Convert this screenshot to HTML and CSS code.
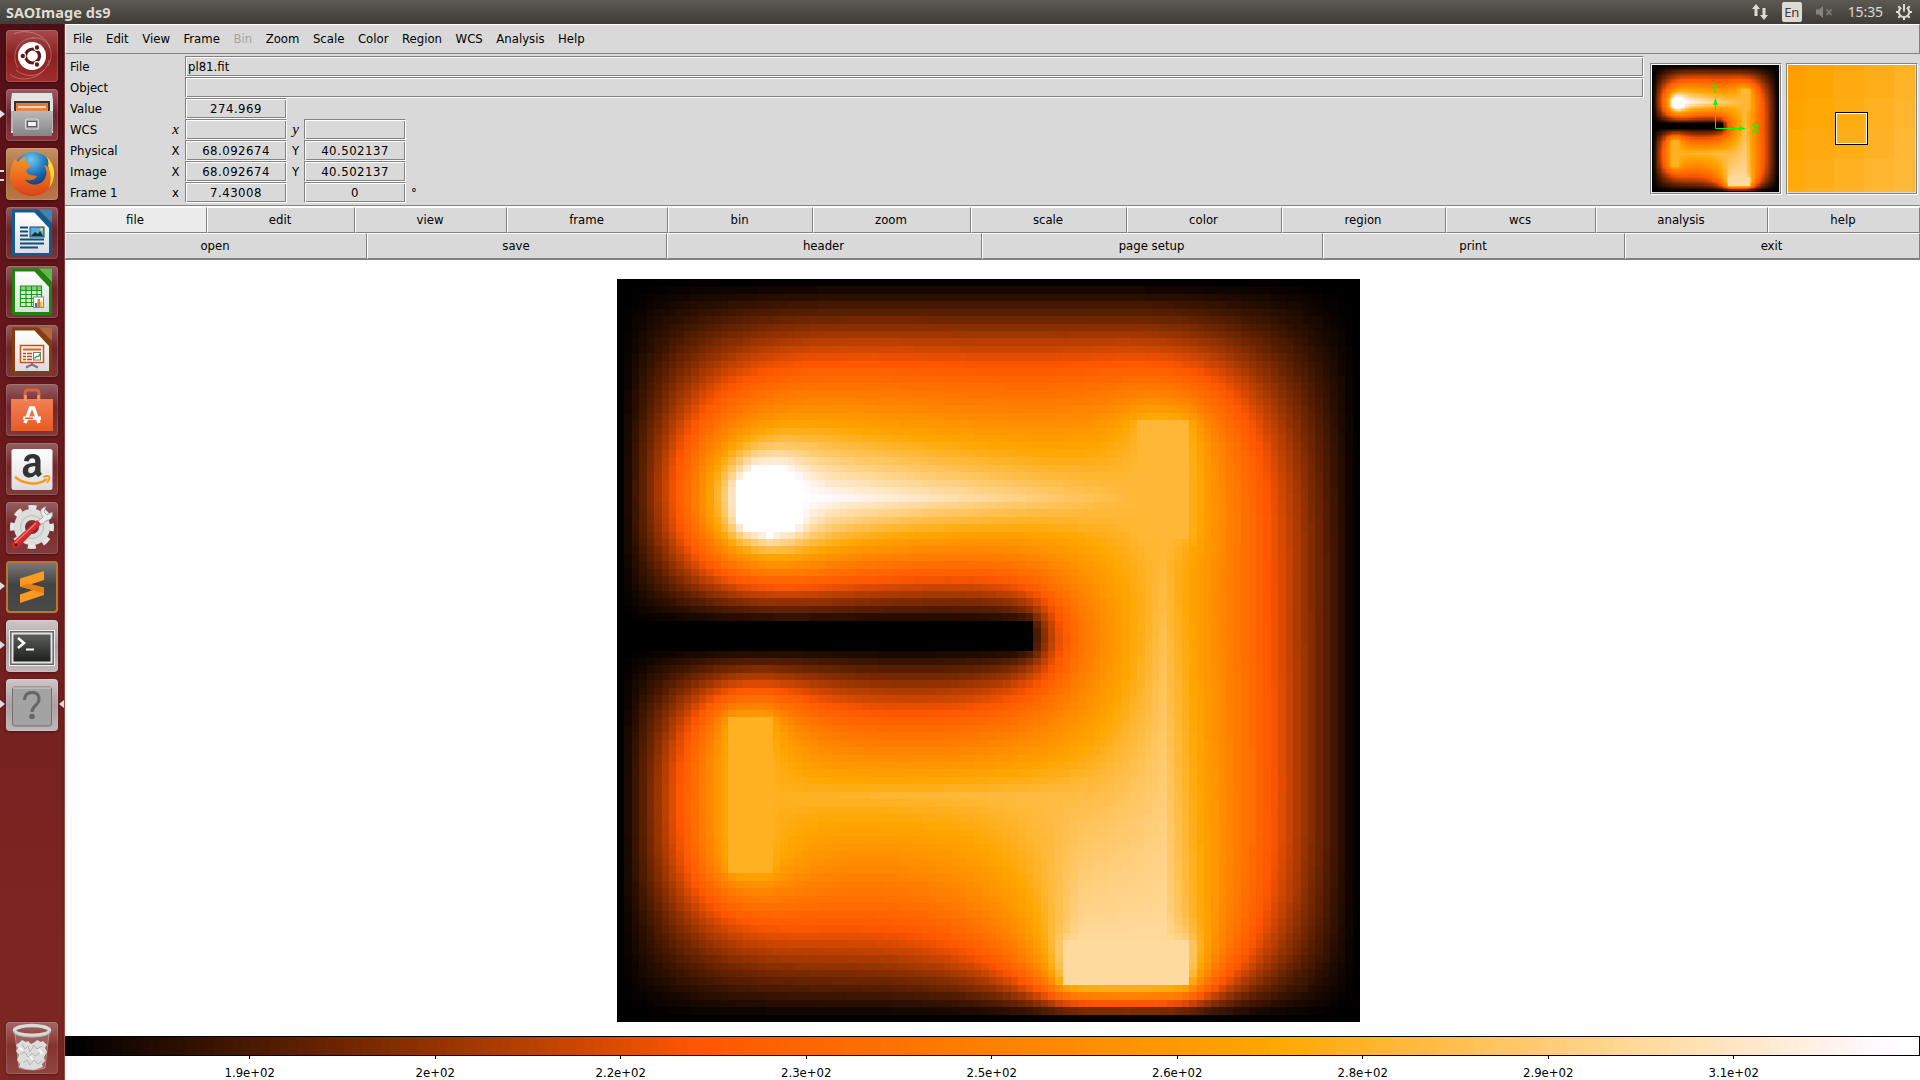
FILE: index.html
```html
<!DOCTYPE html>
<html lang="en">
<head>
<meta charset="utf-8">
<title>SAOImage ds9</title>
<link rel="stylesheet" href="styles.css">
</head>
<body>
<svg width="0" height="0" class="defs">
  <defs>
    <linearGradient id="paper" x1="0" y1="0" x2="0" y2="1"><stop offset="0" stop-color="#fff"/><stop offset="1" stop-color="#dcdcdc"/></linearGradient>
    <linearGradient id="metal" x1="0" y1="0" x2="0" y2="1"><stop offset="0" stop-color="#b9b9b9"/><stop offset="1" stop-color="#858585"/></linearGradient>
    <linearGradient id="bag" x1="0" y1="0" x2="0" y2="1"><stop offset="0" stop-color="#f08055"/><stop offset="1" stop-color="#e95b23"/></linearGradient>
    <linearGradient id="fox" x1="0" y1="0" x2="0" y2="1"><stop offset="0" stop-color="#f39a2b"/><stop offset=".6" stop-color="#e8651c"/><stop offset="1" stop-color="#d8431a"/></linearGradient>
    <radialGradient id="globe" cx=".45" cy=".2" r=".8"><stop offset="0" stop-color="#6fc9f0"/><stop offset=".5" stop-color="#1b72b8"/><stop offset="1" stop-color="#0d2a5c"/></radialGradient>
    <linearGradient id="screen" x1="0" y1="0" x2="0" y2="1"><stop offset="0" stop-color="#5a5d5a"/><stop offset="1" stop-color="#1e201e"/></linearGradient>
  </defs>
</svg>
<header class="topbar">
  <span class="title">SAOImage ds9</span>
  <div class="tray">
    <svg class="t-net" width="18" height="18" viewBox="0 0 18 18"><path d="M5 1 L9 6 H6.500 V13 H3.500 V6 H1z M13 17 L17 12 H14.500 V5 H11.500 V12 H9z" fill="#dfdbd2"/></svg>
    <span class="lang">En</span>
    <svg class="t-vol" width="18" height="14" viewBox="0 0 18 14"><path d="M1 4.500H4L8 1V13L4 9.500H1z" fill="#85837c"/><path d="M11.500 4.500l5 5.500M16.500 4.500l-5 5.500" stroke="#85837c" stroke-width="1.500"/></svg>
    <span class="clock">15:35</span>
    <svg class="t-gear" width="18" height="18" viewBox="0 0 18 18"><g stroke="#dfdbd2" fill="none"><path d="M6.200 4.600A5.200 5.200 0 1 0 11.800 4.600" stroke-width="2"/><path d="M9 1V8.500" stroke-width="2"/><path d="M3.300 3.300l1.700 1.700M14.700 3.300l-1.700 1.700M1 9h2.500M14.500 9H17M3.300 14.700l1.700-1.700M14.700 14.700l-1.700-1.700M9 14.500V17" stroke-width="2"/></g></svg>
  </div>
</header>
<div class="desktop">
  <nav class="launcher">
    <div class="tile dash"><svg viewBox="0 0 52 52"><g fill="none" stroke="#fff" stroke-opacity=".28"><path d="M26 8C42 6 50 22 42 36M43 30C40 46 22 50 10 40M12 38C4 24 12 8 28 8M8 4C20-2 40 4 44 18M4 44C12 52 30 50 38 40"/></g><circle cx="26" cy="26" r="14" fill="#fff"/><circle cx="26.500" cy="26" r="7" fill="none" stroke="#5e1a1c" stroke-width="3.200"/><g fill="#5e1a1c" stroke="#fff" stroke-width="1.200"><circle cx="16.800" cy="26" r="2.800"/><circle cx="31" cy="17.500" r="2.800"/><circle cx="31" cy="34.500" r="2.800"/></g></svg></div>
    <div class="tile files run"><svg viewBox="0 0 52 52"><path d="M6 4h40l1 8v32H5V12z" fill="#e3e3e3"/><path d="M8 12h36v12H8z" fill="#333"/><path d="M10 14h32v8H10z" fill="#e8762f"/><path d="M12 17h28v5H12z" fill="#f7d9b8"/><path d="M10 19h32v4H10z" fill="#ea8344"/><path d="M5 22h42v20H5z" fill="#b5b5b5"/><path d="M7 22h39v25H7z" fill="url(#metal)"/><rect x="19.500" y="30" width="13" height="10" rx="2" fill="none" stroke="#d8d8d8" stroke-width="1.200"/><rect x="21.500" y="32.500" width="9" height="5" fill="#f2f2f2" stroke="#555"/></svg></div>
    <div class="tile firefox run2"><svg viewBox="0 0 52 52"><circle cx="27" cy="23" r="19" fill="url(#globe)"/><path d="M40 8C50 17 51 31 43 41C34 51 16 50 8 40C2 32 3 20 9 11L12 14C14 11 17 9 20 9C19 12 20 14 22 16L25 17C25 20 21 20 20 23C22 28 27 27 31 28C29 33 22 33 19 31C22 37 31 39 37 33C42 28 41 22 38 17C42 18 43 20 43 22C44 17 43 12 40 8z" fill="url(#fox)"/><path d="M41 9C50 18 50 31 43 40C46 31 45 25 42 18C43 15 42 12 41 9z" fill="#fbd83a"/></svg></div>
    <div class="tile doc"><svg viewBox="0 0 52 52"><path d="M6 2.500h26L46 17V47q0 2-2 2H8q-2 0-2-2z" fill="#0d5c92"/><path d="M9 5.500h19.500L43 21V46H9z" fill="url(#paper)"/><path d="M33 2.500h13V16z" fill="#3a86b8"/><path d="M14 20.500h8M14 24.500h8M14 28.500h8M14 32.500h24M14 36.500h24M14 40.500h18" stroke="#0d4f80" stroke-width="2"/><rect x="24" y="20" width="14" height="10" fill="#5aaede" stroke="#12456e"/><path d="M25 29l4-4 3 2 2-3 3 5z" fill="#1c2d33"/><circle cx="35.500" cy="22.500" r="1.500" fill="#f7d04a"/></svg></div>
    <div class="tile doc"><svg viewBox="0 0 52 52"><path d="M6 2.500h26L46 17V47q0 2-2 2H8q-2 0-2-2z" fill="#1d850c"/><path d="M9 5.500h19.500L43 21V46H9z" fill="url(#paper)"/><path d="M33 2.500h13V16z" fill="#55c043"/><rect x="14" y="20" width="22" height="20" fill="#d5f3cf"/><path d="M14 20h22v4.500H14z" fill="#7fd572"/><path d="M14.500 20v20.500h21V20zM14 24.500h22M14 28.500h22M14 32.500h22M14 36.500h22M20 20v20M25.500 20v20M31 20v20" stroke="#23951a" fill="none" stroke-width="1.200"/><rect x="27.500" y="31" width="10" height="10.500" fill="#fff" stroke="#888"/><path d="M29 37h2.500v4H29z" fill="#2a7ab8"/><path d="M31.500 33H34v8h-2.500z" fill="#e8762f"/><path d="M34 35.500h2.500V41H34z" fill="#eebc3a"/></svg></div>
    <div class="tile doc"><svg viewBox="0 0 52 52"><path d="M6 2.500h26L46 17V47q0 2-2 2H8q-2 0-2-2z" fill="#863c0d"/><path d="M9 5.500h19.500L43 21V46H9z" fill="url(#paper)"/><path d="M33 2.500h13V16z" fill="#b1693c"/><rect x="14.500" y="20.500" width="23" height="17" fill="#fbf2ea" stroke="#c2561a" stroke-width="1.500"/><path d="M17 24.500h18" stroke="#d2642a" stroke-width="2"/><path d="M17 28.500h3M17 31.500h3M17 34.500h3M21 28.500h5M21 31.500h5M21 34.500h5" stroke="#b4521a" stroke-width="1.600"/><rect x="27.500" y="27.500" width="7" height="7.500" fill="#fff" stroke="#777"/><path d="M28.500 33.500l2-2 2 0 2-3" stroke="#3aa53a" stroke-width="1.500" fill="none"/><path d="M26 38v3M20 42.500l6-3 6 3" stroke="#777" stroke-width="2" fill="none"/></svg></div>
    <div class="tile doc"><svg viewBox="0 0 52 52"><path d="M19 17V9q0-3 3-3h8q3 0 3 3v8" fill="none" stroke="#d9673c" stroke-width="3"/><path d="M5 15h42v32H5z" fill="url(#bag)"/><path d="M19.500 17v-6M32.500 17v-6" stroke="#f39a78" stroke-width="2.500"/><path d="M19 39L24.500 24h3L33 39" fill="none" stroke="#fff" stroke-width="3.500"/><path d="M17 32.500h18v3.500H17z" fill="#fff"/><path d="M19 33.500h8v1.500h-8z" fill="#e95b23"/></svg></div>
    <div class="tile doc"><svg viewBox="0 0 52 52"><rect x="5.500" y="6" width="41" height="41" rx="2.500" fill="url(#paper)"/><path d="M34.500 28V18.500C34.500 13 31.500 11 26.500 11C21 11 18.500 14 18 18L22.800 18.500C23.300 16.500 24.300 15.300 26.200 15.300C29 15.300 29.300 17 29.300 19.800C23 20 16.800 21.500 16.800 28C16.800 32 19.300 34.500 23 34.500C26 34.500 27.800 33.500 29.800 31.300C30.500 32.500 31 33 32.200 34.200L36 31C35 30 34.500 29.500 34.500 28zM29.300 24.500C29.300 28 27.500 30.200 25 30.200C23 30.200 22.200 28.900 22.200 27.200C22.200 24 25.500 23.300 29.300 23.300z" fill="#333"/><path d="M9 34C19 42 33 42.500 41 36" stroke="#f79a1c" stroke-width="2.500" fill="none"/><path d="M37 34q6-2 6.500 0q0 3-2.500 6" stroke="#f79a1c" stroke-width="1.800" fill="none"/></svg></div>
    <div class="tile doc"><svg viewBox="0 0 52 52"><circle cx="26" cy="25" r="19.500" fill="none" stroke="#e4e6e4" stroke-width="5" stroke-dasharray="8 7.300" stroke-dashoffset="4"/><circle cx="26" cy="25" r="12.500" fill="none" stroke="#dcdedc" stroke-width="11"/><circle cx="26" cy="25" r="11.500" fill="none" stroke="#b9bbb9"/><path d="M31 20L37 15Q31 7 40 4.500L38 10l3 3 5-3Q48 17 40 19L33 24z" fill="#ececec" stroke="#999" stroke-width=".8"/><path d="M31 18L35 22L13 45Q9 48 6.500 45Q4.500 42 8 39z" fill="#d02a2a"/><path d="M30 21L9 41" stroke="#ef7878" stroke-width="1.500"/><circle cx="10" cy="43" r="1.500" fill="#6b1113"/></svg></div>
    <div class="tile sublime run"><svg viewBox="0 0 52 52"><path d="M14 17.500L38 10v9L25 23.300 38 26.500V34L14 42v-8.500L27 29 14 25.500z" fill="#f99a22"/><path d="M14 25.500l24 7V27L22 22.500z" fill="#e67e10"/></svg></div>
    <div class="tile light run"><svg viewBox="0 0 52 52"><path d="M3 10h46v36H3z" fill="#eee"/><path d="M4 11h44v34H4z" fill="#666"/><path d="M5.500 12.500h41v31h-41z" fill="#e2e2e2"/><path d="M7.500 14.500h37v27h-37z" fill="url(#screen)"/><path d="M12 18l6 5-6 5" stroke="#fff" stroke-width="2.500" fill="none"/><path d="M20 29.500h8" stroke="#fff" stroke-width="2"/></svg></div>
    <div class="tile light run focus"><svg viewBox="0 0 52 52"><rect x="6.500" y="8" width="39" height="39" rx="2" fill="#a3a3a3" stroke="#707070"/><path d="M7 9h38" stroke="#d4d4d4"/><path d="M18.500 21Q18.500 13.500 26 13.500Q33 13.500 33 20Q33 23.500 29.500 26.500Q26 29.500 26 33" fill="none" stroke="#666" stroke-width="3"/><circle cx="26" cy="37.500" r="2.800" fill="#666"/></svg></div>
    <div class="tile trash"><svg viewBox="0 0 52 52"><path d="M9 12L13 46q13 4 26 0L43 12z" fill="#fff" fill-opacity=".16" stroke="#fff" stroke-opacity=".35"/><path d="M10 23l4-3 2-2 4 2 2-1 3 3 4-2 2-2 4 2 2-1 4 4-2 3 2 4-3 5 1 4-3 3 1 3-9 3-9-1-6-2 1-3-3-4 2-5-3-4 2-3z" fill="#dcdcdc"/><path d="M16 22l3 5 3-3 2 6 4-7 3 4 5-3M14 32l5-2 3 5 4-4 3 3 6-4M17 41l4-3 3 5 4-5 4 4 4-3" stroke="#b5b5b5" fill="none"/><path d="M13 26l4 2M24 34l3 4M33 27l3 5" stroke="#f7f7f7" stroke-width="2"/><ellipse cx="26" cy="8.500" rx="17.500" ry="5" fill="none" stroke="#d9dcd9" stroke-width="3.500"/><path d="M7.500 9q2 6 18.500 6t18.500-6" fill="none" stroke="#aaaeaa"/></svg></div>
  </nav>
  <main class="app">
    <div class="menubar"><span>File</span><span>Edit</span><span>View</span><span>Frame</span><span class="off">Bin</span><span>Zoom</span><span>Scale</span><span>Color</span><span>Region</span><span>WCS</span><span>Analysis</span><span>Help</span></div>
    <section class="info">
      <div class="fields">
        <span>File</span><i></i><b class="wide left">pl81.fit</b>
        <span>Object</span><i></i><b class="wide"></b>
        <span>Value</span><i></i><b class="num">274.969</b><i class="rest"></i>
        <span>WCS</span><em>x</em><b></b><em>y</em><b></b><i></i>
        <span>Physical</span><i>X</i><b class="num">68.092674</b><i>Y</i><b class="num">40.502137</b><i></i>
        <span>Image</span><i>X</i><b class="num">68.092674</b><i>Y</i><b class="num">40.502137</b><i></i>
        <span>Frame 1</span><i>x</i><b class="num">7.43008</b><i></i><b class="num">0</b><i>°</i>
      </div>
      <div class="view panner"><div class="inner"><canvas id="pan" width="100" height="100"></canvas>
        <svg class="compass" width="128" height="128" viewBox="0 0 128 128"><path d="M63.500 37V63.500H91" stroke="#0f0" fill="none"/><path d="M63.500 33l-2.500 7h5zM94 63.500l-7-2.500v5z" fill="#0f0"/><text x="59.500" y="28">Y</text><text x="99.500" y="68">X</text></svg></div></div>
      <div class="view magnifier"><div class="inner"><canvas id="mag" width="127" height="127"></canvas><span class="box"></span></div></div>
    </section>
    <div class="buttons row1"><button class="on">file</button><button>edit</button><button>view</button><button>frame</button><button>bin</button><button>zoom</button><button>scale</button><button>color</button><button>region</button><button>wcs</button><button>analysis</button><button>help</button></div>
    <div class="buttons row2"><button>open</button><button>save</button><button>header</button><button>page setup</button><button>print</button><button>exit</button></div>
    <section class="frame"><canvas id="image" width="100" height="100"></canvas></section>
    <div class="colorbar"><canvas id="bar" width="200" height="1"></canvas></div>
    <div class="scale"><span>1.9e+02</span><span>2e+02</span><span>2.2e+02</span><span>2.3e+02</span><span>2.5e+02</span><span>2.6e+02</span><span>2.8e+02</span><span>2.9e+02</span><span>3.1e+02</span></div>
  </main>
</div>
<script src="plate.js"></script>
</body>
</html>
```
FILE: styles.css
```css
* { box-sizing: border-box; }
body { margin: 0; width: 1920px; height: 1080px; overflow: hidden; display: flex; flex-direction: column; background: #fff; color: #000; font: 13px/16px "DejaVu Sans Condensed", "DejaVu Sans", sans-serif; font-stretch: condensed; }
.defs { position: absolute; width: 0; height: 0; }
.topbar { height: 24px; flex: none; display: flex; justify-content: space-between; align-items: center; padding: 0 7px 0 6px; background: linear-gradient(#5c5a50, #3d3c38); color: #dfdbd2; font-family: "Noto Sans", sans-serif; font-stretch: normal; }
.title { font-size: 14.500px; font-weight: 700; letter-spacing: .05px; }
.tray { display: flex; align-items: center; font-size: 14px; }
.lang { width: 20px; height: 20px; margin-left: 13px; border-radius: 2px; background: #dfdbd2; color: #3c3b37; text-align: center; line-height: 21px; font-size: 13px; letter-spacing: -.3px; }
.t-vol { margin-left: 13px; }
.clock { margin: 0 12px 0 15px; letter-spacing: -.1px; }
.desktop { flex: 1; min-height: 0; display: flex; }
.launcher { width: 65px; flex: none; display: flex; flex-direction: column; gap: 7px; padding: 6px 6px; background: linear-gradient(90deg, transparent 60px, rgba(0,0,0,.12) 64px, rgba(255,190,170,.25) 64px), linear-gradient(#4b0f14, #5d1218 120px, #7c2623 880px, #7d2723); }
.tile { position: relative; width: 52px; height: 52px; flex: none; border-radius: 4px; background: linear-gradient(rgba(255,255,255,.3), rgba(255,255,255,.06) 45%, rgba(255,255,255,.14)); box-shadow: inset 0 0 0 1px rgba(255,255,255,.14), 0 1px 3px rgba(0,0,0,.35); }
.tile svg { display: block; width: 52px; height: 52px; }
.dash { background: linear-gradient(#a84a4b, #8a2020 50%, #a02e2e); overflow: hidden; }
.files { background: linear-gradient(#9b5c66, #6c2230 50%, #8b3743); }
.firefox { background: linear-gradient(#c69265, #a9693b 50%, #b97744); }
.sublime { background: linear-gradient(#7d7d7d, #434343 45%, #4a4a4a); box-shadow: inset 0 0 0 2px #b9772e; }
.light { background: linear-gradient(#cfc6c7, #aaa0a2 50%, #c0b7b8); }
.trash { margin-top: auto; }
.run::before, .focus::after { content: ""; position: absolute; left: -6px; top: 21px; border: 4px solid transparent; border-left: 5px solid #ddd; border-right: 0; }
.focus::after { left: 53px; border-left: 0; border-right: 5px solid #ddd; }
.run2::before { content: ""; position: absolute; left: -6px; top: 22px; width: 4px; height: 7px; border: solid #ddd; border-width: 2px 0; }
.app { flex: 1; min-width: 0; display: flex; flex-direction: column; }
.menubar { height: 30px; background: #d9d9d9; border: 1px solid; border-color: #fff #828282 #828282 #fff; display: flex; align-items: center; gap: 13.550px; padding-left: 7px; }
.off { color: #a3a3a3; }
.info { height: 152px; background: #d9d9d9; border-bottom: 1px solid #828282; display: flex; align-items: flex-start; padding: 2px 2px 0 5px; }
.fields { width: 1574px; display: grid; grid-template-columns: 96px 19px 102px 17px 102px 1fr; grid-auto-rows: 21px; line-height: 21px; }
.fields i, .fields em { text-align: center; font-style: normal; }
.fields em { font: italic 15px/20px "Liberation Serif", serif; }
.fields i:nth-last-child(1) { text-align: left; padding-left: 5px; }
.fields b { font-weight: 400; text-align: center; line-height: 17px; border: 1px solid; border-color: #828282 #fff #fff #828282; box-shadow: inset 1px 1px #fff, inset -1px -1px #828282; padding-top: 1px; }
.fields .wide { grid-column: 3 / -1; }
.fields .left { text-align: left; padding-left: 2px; }
.fields .rest { grid-column: 4 / -1; }
.num { letter-spacing: .500px; }
.view { width: 132px; height: 132px; flex: none; border: 1px solid; border-color: #828282 #fff #fff #828282; margin: 7px 0 0 6px; }
.magnifier { margin-left: 4px; }
.inner { position: relative; width: 130px; height: 130px; border: 1px solid; border-color: #fff #828282 #828282 #fff; }
.inner canvas { display: block; width: 127px; height: 127px; image-rendering: pixelated; }
.compass { position: absolute; left: 0; top: 0; }
.compass text { font: 11.500px "DejaVu Sans", sans-serif; fill: #0f0; }
.box { position: absolute; left: 47px; top: 47px; width: 33px; height: 33px; border: 1px solid #000; box-shadow: inset 0 0 0 1px #fff; }
.buttons { display: grid; height: 27px; }
.row1 { padding-top: 1px; background: #fff; grid-template-columns: 142px 148px 152px 161px 145px 158px 156px 155px 164px 150px 172px 152px; }
.row2 { border-bottom: 1px solid #828282; grid-template-columns: 302px 300px 315px 341px 302px 295px; }
.buttons button { font: inherit; color: inherit; padding: 0 2px 0 0; margin: 0; border: 1px solid; border-color: #fff #828282 #828282 #fff; background: #d9d9d9; border-radius: 0; }
.buttons .on { background: #ececec; }
.frame { flex: 1; min-height: 0; padding: 19px 0 0 552px; }
.frame canvas { display: block; width: 743px; height: 743px; image-rendering: pixelated; }
.colorbar { height: 20px; flex: none; border: 1px solid #000; }
.colorbar canvas { display: block; width: 1853px; height: 18px; image-rendering: pixelated; }
.scale { height: 24px; flex: none; display: flex; padding-left: 92px; }
.scale span { width: 185.500px; text-align: center; padding-top: 9px; background: linear-gradient(#000, #000) 50% 0 / 1px 3px no-repeat; }
```
FILE: plate.js
```js
// Steady-state temperature of a 100 x 100 plate with fixed-temperature parts.
const N = 100;
const v = new Float64Array(N * N).fill(0.4);
const fixed = new Uint8Array(N * N);

function set(col, row, value) {
  v[row * N + col] = value;
  fixed[row * N + col] = 1;
}
function rect(c0, c1, r0, r1, value) {
  for (let r = r0; r <= r1; r++) for (let c = c0; c <= c1; c++) set(c, r, value);
}
function line(c0, r0, c1, r1, a, b) {
  const n = Math.max(Math.abs(c1 - c0), Math.abs(r1 - r0));
  for (let i = 0; i <= n; i++) {
    const t = i / n;
    set(Math.round(c0 + (c1 - c0) * t), Math.round(r0 + (r1 - r0) * t), a + (b - a) * t);
  }
}

rect(0, 99, 0, 0, 0);
rect(0, 99, 99, 99, 0);
rect(0, 0, 0, 99, 0);
rect(99, 99, 0, 99, 0);
line(24, 29, 70, 29, 1, 0.717);
line(73, 35, 73, 89, 0.717, 0.851);
line(21, 69, 62, 69, 0.69, 0.74);
line(62, 69, 62, 89, 0.74, 0.851);
rect(0, 55, 46, 49, 0);
rect(70, 76, 19, 34, 0.717);
rect(15, 20, 59, 79, 0.69);
rect(60, 76, 89, 94, 0.853);
rect(18, 22, 25, 25, 1);
rect(17, 23, 26, 26, 1);
rect(16, 24, 27, 32, 1);
rect(17, 23, 33, 33, 1);
set(20, 34, 1);

for (let k = 0; k < 700; k++) {
  for (let i = N; i < N * N - N; i++) {
    if (!fixed[i]) v[i] += 1.92 * ((v[i - 1] + v[i + 1] + v[i - N] + v[i + N]) / 4 - v[i]);
  }
}

function heat(x) {
  const q = Math.floor(Math.min(0.999, Math.max(0, x)) * 200) / 199;
  const b = q < 0.65 ? 0 : q < 0.98 ? (q - 0.65) / 0.33 : 1;
  return [Math.min(1, q / 0.34) * 255, q * 255, b * 255];
}

function paint(id) {
  const ctx = document.getElementById(id).getContext('2d');
  const img = ctx.createImageData(N, N);
  for (let i = 0; i < N * N; i++) {
    const [r, g, b] = heat(v[i]);
    img.data.set([r, g, b, 255], i * 4);
  }
  ctx.putImageData(img, 0, 0);
}
paint('image');
paint('pan');

const mag = document.getElementById('mag').getContext('2d');
mag.imageSmoothingEnabled = false;
const cell = 29.72;
mag.drawImage(document.getElementById('image'), 64 - 67.59 * cell, 64 - 60 * cell, N * cell, N * cell);

const bar = document.getElementById('bar').getContext('2d');
for (let i = 0; i < 200; i++) {
  const [r, g, b] = heat((i + 0.5) / 200);
  bar.fillStyle = `rgb(${r},${g},${b})`;
  bar.fillRect(i, 0, 1, 1);
}
```
